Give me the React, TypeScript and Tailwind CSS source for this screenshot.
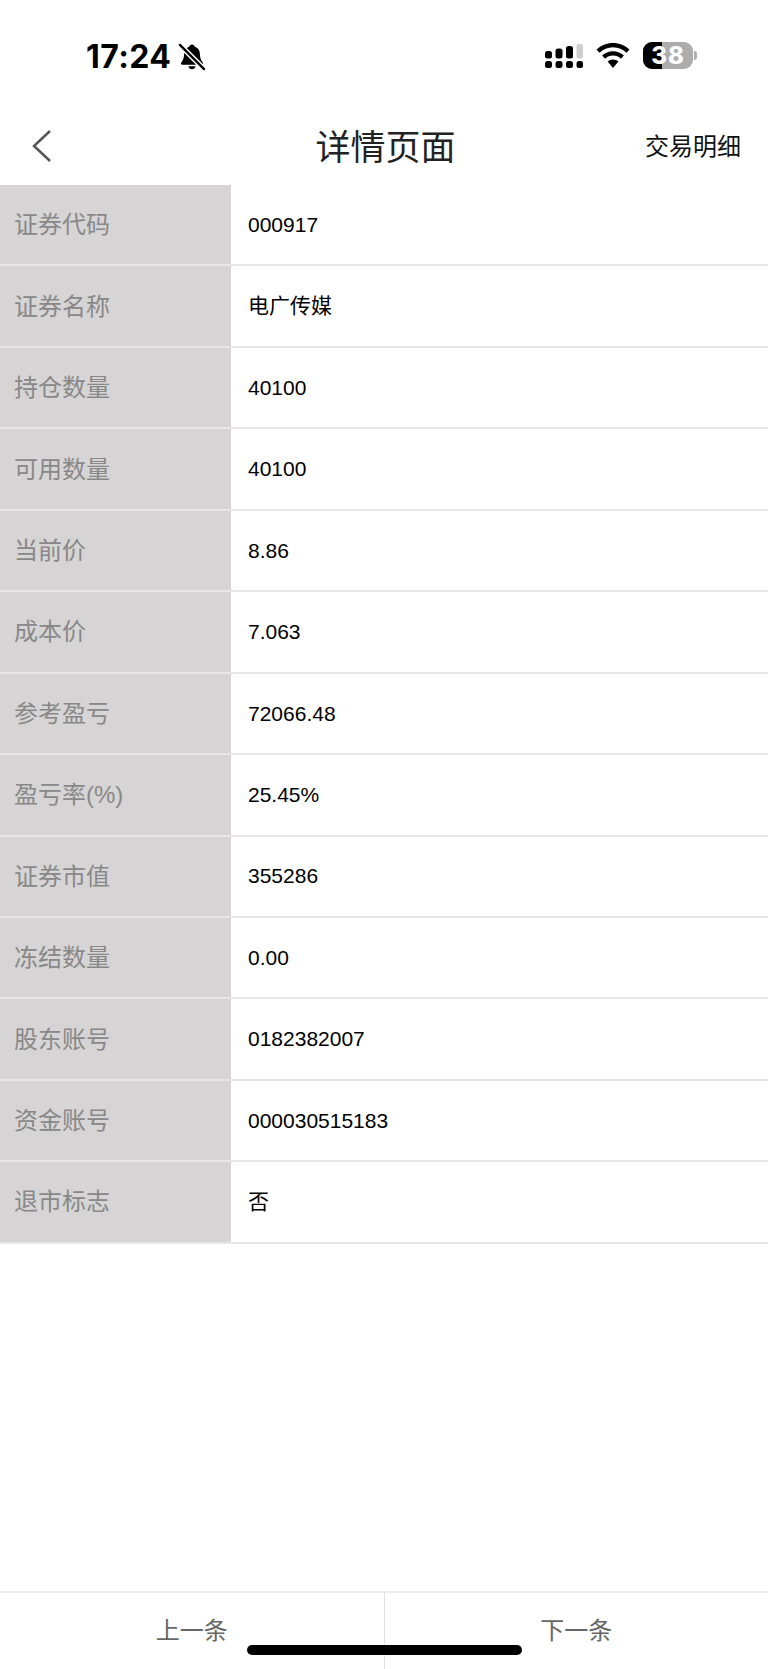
import React from 'react';

const rows = [
  ['证券代码', '000917'],
  ['证券名称', '电广传媒'],
  ['持仓数量', '40100'],
  ['可用数量', '40100'],
  ['当前价', '8.86'],
  ['成本价', '7.063'],
  ['参考盈亏', '72066.48'],
  ['盈亏率(%)', '25.45%'],
  ['证券市值', '355286'],
  ['冻结数量', '0.00'],
  ['股东账号', '0182382007'],
  ['资金账号', '000030515183'],
  ['退市标志', '否'],
];

const BellOff = () => (
  <svg width="28" height="28" viewBox="0 0 29 29" fill="none">
    <path d="M14.500 1.500c-1.500 0-2.600 1-2.800 2.300C8.300 4.700 6.400 7.500 6.300 11.200c-.1 3.500-.7 6.500-2.900 9-.8 1-.2 2.400 1.100 2.400h20c1.300 0 1.900-1.400 1.100-2.400-2.200-2.500-2.800-5.500-2.900-9-.1-3.700-2-6.500-5.400-7.400-.2-1.300-1.300-2.300-2.800-2.300z" fill="#000" />
    <path d="M10.800 24h7.400c-.3 1.800-1.900 3.200-3.700 3.200s-3.400-1.400-3.700-3.200z" fill="#000" />
    <path d="M2 2l25 25" stroke="#fff" strokeWidth="5.500" />
    <path d="M2 2l25 25" stroke="#000" strokeWidth="2.400" strokeLinecap="round" />
  </svg>
);

const Signal = () => (
  <svg width="40" height="24" viewBox="0 0 40 24" fill="#000">
    <rect x="0" y="7" width="7" height="7.500" rx="2.500" />
    <rect x="10.500" y="4.500" width="7" height="10" rx="2.500" />
    <rect x="21" y="2" width="7" height="12.500" rx="2.500" />
    <rect x="31.500" y="0" width="6.500" height="14.500" rx="2" fill="#cfcfcf" />
    <rect x="0" y="17" width="7" height="7" rx="2.500" />
    <rect x="10.500" y="17" width="7" height="7" rx="2.500" />
    <rect x="21" y="17" width="7" height="7" rx="2.500" />
    <rect x="31.500" y="17" width="6.500" height="7" rx="2.500" />
  </svg>
);

const Wifi = () => (
  <svg width="34" height="25" viewBox="0 0 34 25" fill="#000">
    <path d="M17 0C10.600 0 4.800 2.500.5 6.600l3 3.200C7 6.400 11.800 4.300 17 4.300s10 2.100 13.500 5.500l3-3.200C29.200 2.500 23.400 0 17 0z" />
    <path d="M17 8.200c-4.200 0-8 1.600-10.900 4.300l3 3.200c2.100-1.900 4.900-3.100 7.900-3.100s5.800 1.200 7.900 3.100l3-3.200C25 9.800 21.200 8.200 17 8.200z" />
    <path d="M17 16.400c-2.100 0-4 .8-5.400 2.100L17 25l5.400-6.500c-1.400-1.300-3.300-2.100-5.400-2.100z" />
  </svg>
);

const Battery = () => (
  <div className="relative flex items-center">
    <div className="relative flex h-[27px] w-[50px] items-center justify-center overflow-hidden rounded-[9px] bg-[#adadad]">
      <div className="absolute inset-y-0 left-0 w-[19px] bg-black" />
      <span className="relative text-[24px] font-extrabold leading-none tracking-[1px] text-white [font-family:Inter,sans-serif]">38</span>
    </div>
    <div className="ml-[1px] h-[9px] w-[3px] rounded-r-full bg-[#adadad]" />
  </div>
);

export default function App() {
  return (
    <div className="relative flex h-[1669px] w-[768px] flex-col overflow-hidden bg-white [font-family:'Liberation_Sans','Noto_Sans_CJK_SC',sans-serif]">
      <div className="flex h-[100px] shrink-0 items-start justify-between pl-[86px] pr-[71px] pt-[42px]">
        <div className="flex items-center gap-[7px]">
          <span className="text-[32px] font-bold leading-[30px] tracking-[0.4px] text-black [font-family:Inter,sans-serif]">17:24</span>
          <BellOff />
        </div>
        <div className="flex items-center">
          <Signal />
          <div className="ml-[11px] mr-[13px]"><Wifi /></div>
          <Battery />
        </div>
      </div>

      <div className="grid h-[85px] shrink-0 grid-cols-[1fr_auto_1fr] items-center pl-[30px] pr-[27px]">
        <svg className="mt-[6px]" width="24" height="34" viewBox="0 0 24 34" fill="none">
          <path d="M20 2L4 17l16 15" stroke="#555" strokeWidth="2.500" />
        </svg>
        <div className="mt-[9px] text-[35px] leading-none text-[#222]">详情页面</div>
        <div className="mt-[8px] justify-self-end text-[24px] leading-none text-[#111]">交易明细</div>
      </div>

      <div className="flex flex-col">
        {rows.map(([label, value]) => (
          <div key={label} className="flex h-[81.45px] border-b-2 border-[#e6e6e6]">
            <div className="flex w-[230.500px] items-center bg-[#d6d4d5] pl-[14px] pt-[1px] text-[24px] text-[#888]">{label}</div>
            <div className="flex flex-1 items-center pl-[17.500px] text-[21px] text-black">{value}</div>
          </div>
        ))}
      </div>

      <div className="mt-auto flex h-[78px] border-t-2 border-[#ececec]">
        <div className="flex flex-1 items-center justify-center text-[24px] text-[#666]">上一条</div>
        <div className="w-[1px] bg-[#e0e0e0]" />
        <div className="flex flex-1 items-center justify-center text-[24px] text-[#666]">下一条</div>
      </div>

      <div className="absolute bottom-[14px] left-[247px] h-[10px] w-[275px] rounded-full bg-black" />
    </div>
  );
}
